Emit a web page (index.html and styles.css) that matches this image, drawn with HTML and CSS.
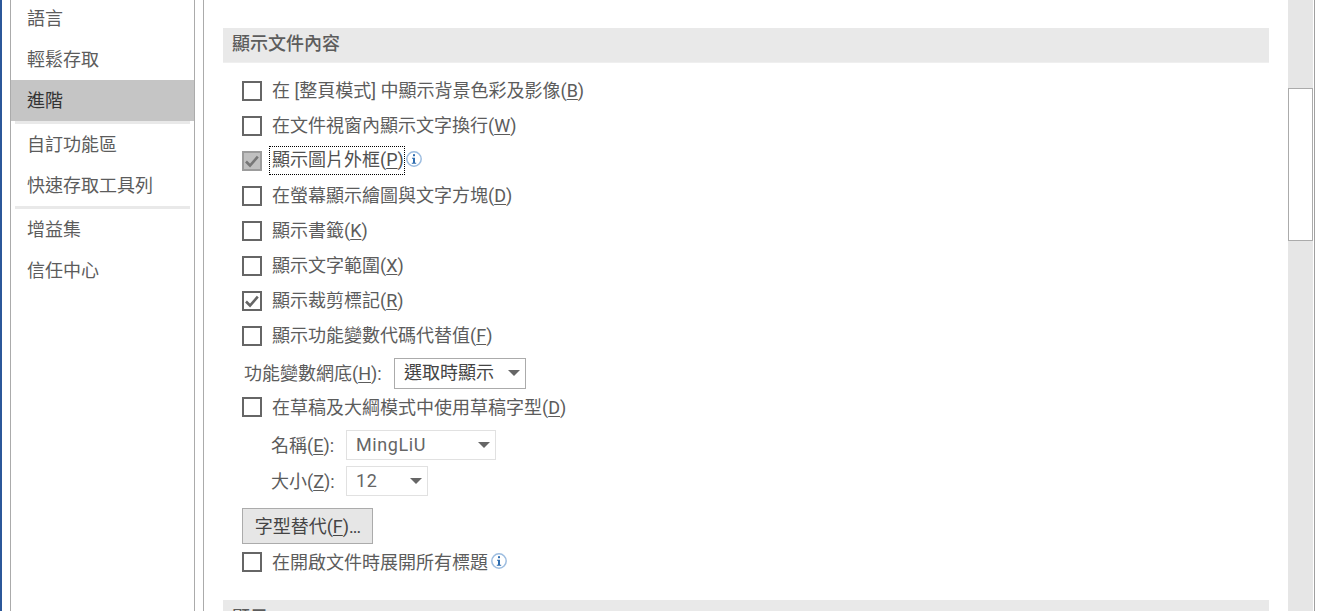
FILE: index.html
```html
<!DOCTYPE html>
<html lang="zh-Hant">
<head>
<meta charset="utf-8">
<title>選項</title>
<link rel="stylesheet" href="styles.css">
</head>
<body>
<div class="window">
  <div class="accent"></div>
  <nav class="sidebar">
    <div class="nav-item">語言</div>
    <div class="nav-item">輕鬆存取</div>
    <div class="nav-item selected">進階</div>
    <div class="nav-divider"></div>
    <div class="nav-item">自訂功能區</div>
    <div class="nav-item">快速存取工具列</div>
    <div class="nav-divider"></div>
    <div class="nav-item">增益集</div>
    <div class="nav-item">信任中心</div>
  </nav>
  <main class="pane">
    <h2 class="section">顯示文件內容</h2>
    <div class="options">
      <div class="row"><span class="box"></span><span class="label">在 [整頁模式] 中顯示背景色彩及影像(<u>B</u>)</span></div>
      <div class="row"><span class="box"></span><span class="label">在文件視窗內顯示文字換行(<u>W</u>)</span></div>
      <div class="row"><span class="box box-mixed"><svg class="check" viewBox="0 0 16 16"><path d="M2 8.5 6 12.5 13.8 3.6" fill="none" stroke="#777" stroke-width="2.6"/></svg></span><span class="label focus">顯示圖片外框(<u>P</u>)</span><svg class="info info-a" viewBox="0 0 16 16"><circle cx="8" cy="8" r="7.2" fill="#fff" stroke="#9dbde0" stroke-width="1.5"/><rect x="7" y="3.2" width="2" height="2" fill="#2f6db0"/><path d="M6 6.7H9V11.8H10.2V12.8H5.8V11.8H7V7.7H6Z" fill="#2f6db0"/></svg></div>
      <div class="row"><span class="box"></span><span class="label">在螢幕顯示繪圖與文字方塊(<u>D</u>)</span></div>
      <div class="row"><span class="box"></span><span class="label">顯示書籤(<u>K</u>)</span></div>
      <div class="row"><span class="box"></span><span class="label">顯示文字範圍(<u>X</u>)</span></div>
      <div class="row"><span class="box"><svg class="check" viewBox="0 0 16 16"><path d="M2 8.5 6 12.5 13.8 3.6" fill="none" stroke="#666" stroke-width="2.6"/></svg></span><span class="label">顯示裁剪標記(<u>R</u>)</span></div>
      <div class="row"><span class="box"></span><span class="label">顯示功能變數代碼代替值(<u>F</u>)</span></div>
      <div class="field field-shade"><span class="field-label">功能變數網底(<u>H</u>):</span><span class="combo combo-shade">選取時顯示</span></div>
      <div class="row row-draft"><span class="box"></span><span class="label">在草稿及大綱模式中使用草稿字型(<u>D</u>)</span></div>
      <div class="field field-name"><span class="field-label">名稱(<u>E</u>):</span><span class="combo combo-off combo-name">MingLiU</span></div>
      <div class="field field-size"><span class="field-label">大小(<u>Z</u>):</span><span class="combo combo-off combo-size">12</span></div>
      <button class="btn" type="button">字型替代(<u>F</u>)<span class="dots">...</span></button>
      <div class="row row-last"><span class="box"></span><span class="label">在開啟文件時展開所有標題</span><svg class="info info-b" viewBox="0 0 16 16"><circle cx="8" cy="8" r="7.2" fill="#fff" stroke="#9dbde0" stroke-width="1.5"/><rect x="7" y="3.2" width="2" height="2" fill="#2f6db0"/><path d="M6 6.7H9V11.8H10.2V12.8H5.8V11.8H7V7.7H6Z" fill="#2f6db0"/></svg></div>
    </div>
    <h2 class="section section-next">顯示</h2>
  </main>
  <div class="scrollbar"><div class="thumb"></div></div>
  <div class="edge"></div>
</div>
</body>
</html>
```
FILE: styles.css
```css
* { box-sizing: border-box; }
html, body { margin: 0; height: 611px; overflow: hidden; background: #fff; }
body { font-family: Roboto, "Noto Sans CJK TC", "Noto Sans", sans-serif; font-size: 18px; color: #505050; }
.window { display: flex; height: 611px; width: 1322px; overflow: hidden; }
.accent { width: 2px; flex: none; background: #2b579a; margin-right: 8px; }
.sidebar { width: 185px; flex: none; border-left: 1px solid #ababab; border-right: 1px solid #ababab; margin-right: 8px; }
.nav-item { height: 41px; padding: 1px 0 0 16px; line-height: 40px; color: #5c5c5c; white-space: nowrap; }
.nav-item:first-child { margin-top: -2px; }
.nav-item.selected { background: #c5c5c5; color: #333; }
.nav-divider { height: 3px; margin: 0 4px; background: #e9e9e9; }
.pane { flex: none; width: 1085px; border-left: 1px solid #ababab; padding: 28px 19px 0; overflow: hidden; }
.section { margin: 0; height: 35px; line-height: 31px; padding-left: 9px; background: #e9e9e9; border-bottom: 1px solid #efefef; font-size: 18px; font-weight: 500; color: #5c5c5c; }
.section-next { line-height: 36px; }
.options { padding: 10px 0 0 19px; height: 537px; }
.row { display: flex; align-items: center; height: 35px; white-space: nowrap; }
.box { flex: none; display: flex; align-items: center; justify-content: center; width: 20px; height: 20px; border: 2px solid #666; background: #fff; margin-right: 10px; }
.box-mixed { background: #c0c0c0; border-color: #9c9c9c; }
.check { width: 16px; height: 16px; display: block; }
.label { color: #5c5c5c; padding-bottom: 3px; }
.label u, .field-label u, .btn u { text-underline-offset: 2px; }
.focus { flex: none; width: 136px; border: 1px dotted #000; padding: 2px; margin-left: -3px; height: 29px; line-height: 21px; color: #505050; }
.info { width: 16px; height: 16px; flex: none; }
.info-a { margin-top: -4px; margin-left: 1px; }
.info-b { margin-top: -2px; margin-left: 3px; }
.field { display: flex; align-items: center; white-space: nowrap; }
.field-label { color: #5c5c5c; padding-bottom: 2px; }
.field-shade { height: 31px; margin-top: 5px; padding-left: 2px; }
.field-shade .field-label { width: 150px; padding-bottom: 3px; }
.field-name { height: 30px; margin-top: 6px; padding-left: 29px; }
.field-size { height: 30px; margin-top: 6px; padding-left: 29px; }
.field-name .field-label, .field-size .field-label { width: 75px; }
.combo { position: relative; display: block; height: 100%; line-height: 28px; padding-left: 9px; border: 1px solid #ababab; color: #444; background: #fff; }
.combo::after { content: ""; position: absolute; right: 5px; top: 11px; border-left: 6px solid transparent; border-right: 6px solid transparent; border-top: 6px solid #666; }
.combo-shade { width: 132px; }
.combo-off { border-color: #e1e1e1; color: #666; }
.combo-name { width: 150px; letter-spacing: 0.6px; }
.combo-size { width: 82px; letter-spacing: 0.6px; }
.row-draft { height: 34px; margin-top: 1px; }
.btn { display: block; width: 131px; height: 36px; margin-top: 12px; padding: 0 0 3px; border: 1px solid #ababab; background: #e6e6e6; font: inherit; color: #444; white-space: nowrap; }
.dots { letter-spacing: -1px; }
.row-last { height: 36px; }
.scrollbar { flex: none; width: 25px; background: #e6e6e6; padding-top: 88px; }
.thumb { width: 25px; height: 153px; background: #fff; border: 1px solid #ababab; }
.edge { flex: none; width: 1px; margin-left: 1px; background: #a0a0a0; }
```
